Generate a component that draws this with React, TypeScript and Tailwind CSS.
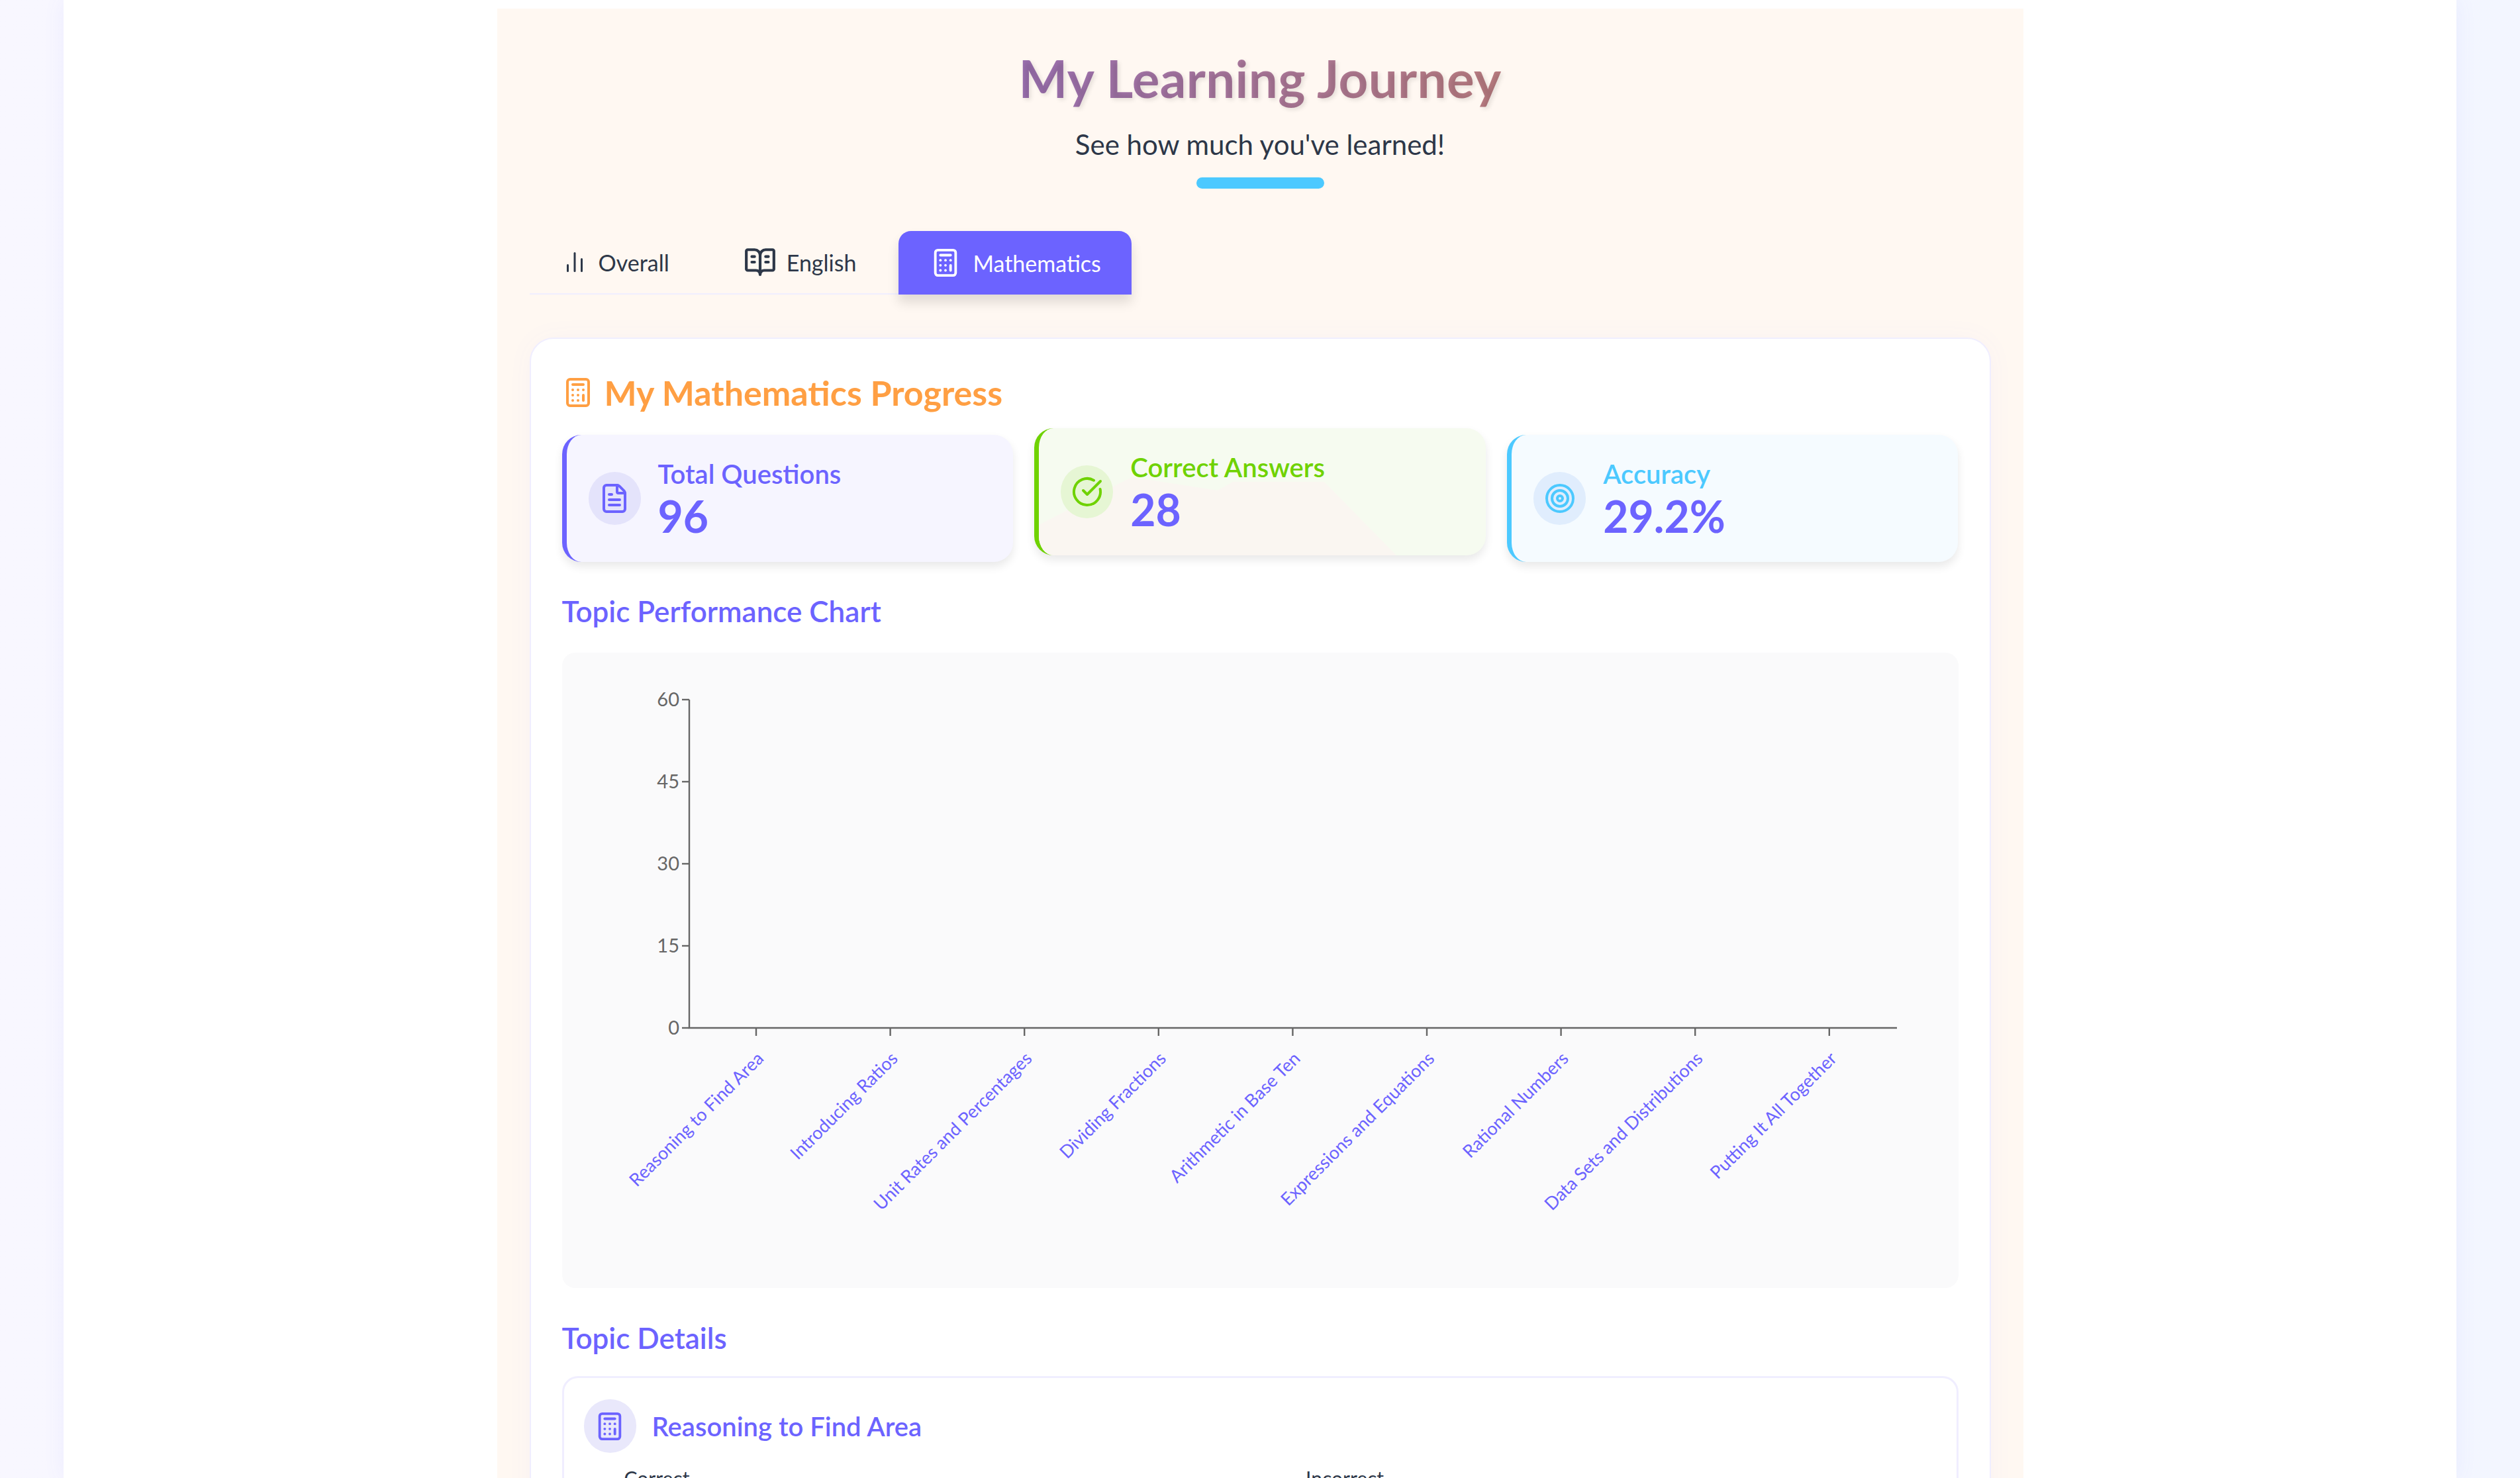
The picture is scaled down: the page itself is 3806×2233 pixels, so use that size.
import React from 'react';
import { BookOpenText, Calculator, ChartNoAxesColumn, CircleCheckBig, FileText, Target } from 'lucide-react';

const topics = [
  'Reasoning to Find Area',
  'Introducing Ratios',
  'Unit Rates and Percentages',
  'Dividing Fractions',
  'Arithmetic in Base Ten',
  'Expressions and Equations',
  'Rational Numbers',
  'Data Sets and Distributions',
  'Putting It All Together',
];

const font = "font-['Lato',sans-serif]";

const Chart = () => {
  const left = 192;
  const base = 567;
  return (
    <svg width="2108" height="960" className="block" fontFamily="Lato, sans-serif">
      <path d={`M${left} 71V${base}H2016`} fill="none" stroke="#666" strokeWidth="2.4" />
      {[60, 45, 30, 15, 0].map((v, i) => {
        const y = 71 + i * 124;
        return (
          <g key={v}>
            <line x1={left - 11} x2={left} y1={y} y2={y} stroke="#666" strokeWidth="2.4" />
            <text x={left - 15} y={y + 10} textAnchor="end" fontSize="29" fill="#666">{v}</text>
          </g>
        );
      })}
      {topics.map((t, i) => {
        const x = 293 + i * 202.6;
        return (
          <g key={t}>
            <line x1={x} x2={x} y1={base} y2={base + 12} stroke="#666" strokeWidth="2.4" />
            <text
              x={x + 13}
              y={base + 48}
              textAnchor="end"
              fontSize="27"
              fill="#6c63ff"
              transform={`rotate(-45 ${x + 13} ${base + 48})`}
            >
              {t}
            </text>
          </g>
        );
      })}
    </svg>
  );
};

const StatCard = ({
  icon, label, value, border, bg, circle, color, lifted, peak,
}: {
  icon: React.ReactNode; label: string; value: string; border: string; bg: string; circle: string; color: string; lifted?: boolean; peak?: boolean;
}) => (
  <div className={`relative flex h-[192px] items-center gap-[26px] overflow-hidden rounded-[29px] border-l-[7px] pl-[33px] shadow-[0_7px_14px_rgba(0,0,0,0.09)] ${border} ${bg} ${lifted ? '-translate-y-[10px]' : ''}`}>
    {peak && (
      <svg className="absolute inset-0" width="681" height="192">
        <path d="M0 146L140 74L186 81L270 94L293 81L431 81L540 192L0 192Z" fill="#faf6f1" />
      </svg>
    )}
    <div className={`relative flex h-[80px] w-[79px] shrink-0 items-center justify-center rounded-full ${circle} ${color}`}>
      {icon}
    </div>
    <div className="relative flex flex-col">
      <div className={`h-[50px] text-[40px] leading-[50px] font-semibold ${color}`}>{label}</div>
      <div className="mt-[3px] h-[72px] text-[66px] leading-[72px] font-bold text-[#6c63ff]">{value}</div>
    </div>
  </div>
);

export default function App() {
  return (
    <div className={`h-[2233px] overflow-hidden bg-gradient-to-r from-[#f8f7ff] to-[#f3f6ff] ${font}`}>
      <div className="mx-[96px] h-full bg-white shadow-[0_0_30px_rgba(108,99,255,0.08)]">
        <div className="flex justify-center pt-[13px]">
          <div className="w-[2305px] bg-[#fff8f2] px-[49px] text-[#2d3748]">
            <header className="flex flex-col items-center pt-[58px]">
              <h1 className="h-[94px] bg-gradient-to-r from-[#9b70b0] to-[#b97c80] bg-clip-text text-[78px] leading-[94px] font-bold tracking-[0.4px] text-transparent [text-shadow:3px_3px_6px_rgba(0,0,0,0.1)]">
                My Learning Journey
              </h1>
              <p className="mt-[23px] h-[60px] text-[42px] leading-[60px]">See how much you've learned!</p>
              <div className="mt-[20px] h-[17px] w-[193px] rounded-full bg-[#4cc9ff]" />
            </header>

            <nav className="mt-[64px] flex h-[96px] w-fit items-stretch border-b-[2px] border-[#f0eeff] text-[34px]">
              <div className="flex items-center gap-[18px] pl-[50px] pr-[56px]">
                <ChartNoAxesColumn size={36} strokeWidth={2} />
                <span>Overall</span>
              </div>
              <div className="flex items-center gap-[15px] pl-[56px] pr-[64px]">
                <BookOpenText size={50} strokeWidth={2} />
                <span>English</span>
              </div>
              <div className="flex h-[96px] items-center gap-[18px] rounded-t-[19px] bg-[#6c63ff] pl-[48px] pr-[46px] text-white shadow-[0_12px_18px_rgba(0,0,0,0.12)]">
                <Calculator size={46} strokeWidth={2} />
                <span>Mathematics</span>
              </div>
            </nav>

            <main className="mt-[65px] rounded-t-[36px] border-[2px] border-[#f0eeff] bg-white px-[47px] pt-[49px] shadow-[0_0_40px_rgba(108,99,255,0.04)]">
              <div className="flex h-[64px] items-center gap-[16px] text-[#ff9f43]">
                <Calculator size={48} strokeWidth={2} />
                <h2 className="text-[52px] font-bold">My Mathematics Progress</h2>
              </div>

              <div className="mt-[32px] grid grid-cols-3 gap-[32.5px]">
                <StatCard icon={<FileText size={48} strokeWidth={2} />} label="Total Questions" value="96" border="border-[#6c63ff]" bg="bg-[#f6f5ff]" circle="bg-[#e4e3fb]" color="text-[#6c63ff]" />
                <StatCard icon={<CircleCheckBig size={48} strokeWidth={2} />} label="Correct Answers" value="28" border="border-[#6fd200]" bg="bg-[#f6fbf0]" circle="bg-[#e6f6d4]" color="text-[#6fd200]" lifted peak />
                <StatCard icon={<Target size={48} strokeWidth={2} />} label="Accuracy" value="29.2%" border="border-[#4cc9ff]" bg="bg-[#f5fbff]" circle="bg-[#e0edfd]" color="text-[#4cc9ff]" />
              </div>

              <h3 className="mt-[44px] h-[60px] text-[44px] leading-[60px] font-semibold text-[#6c63ff]">Topic Performance Chart</h3>
              <div className="mt-[33px] h-[960px] rounded-[20px] bg-[#fafafb]">
                <Chart />
              </div>

              <h3 className="mt-[45px] h-[60px] text-[44px] leading-[60px] font-semibold text-[#6c63ff]">Topic Details</h3>
              <div className="mt-[28px] rounded-[24px] border-[3px] border-[#f0eeff] p-[30px] pt-[32px]">
                <div className="flex items-center gap-[24px]">
                  <div className="flex h-[81px] w-[79px] items-center justify-center rounded-full bg-[#e9e8fb] text-[#6c63ff]">
                    <Calculator size={46} strokeWidth={2} />
                  </div>
                  <h4 className="text-[40px] font-semibold text-[#6c63ff]">Reasoning to Find Area</h4>
                </div>
                <div className="mt-[16px] grid grid-cols-2 gap-4 text-[30px] text-[#2d3748]">
                  <div className="pl-[61px]">Correct</div>
                  <div className="pl-[61px]">Incorrect</div>
                </div>
              </div>
            </main>
          </div>
        </div>
      </div>
    </div>
  );
}
